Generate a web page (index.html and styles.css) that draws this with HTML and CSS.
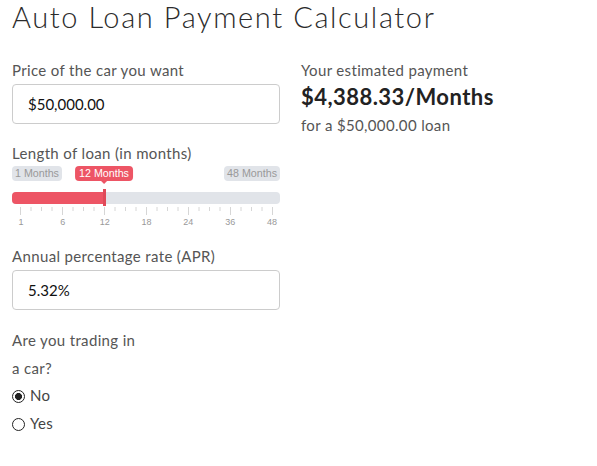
FILE: index.html
```html
<!DOCTYPE html>
<html lang="en">
<head>
<meta charset="utf-8">
<title>Auto Loan Payment Calculator</title>
<link rel="stylesheet" href="styles.css">
</head>
<body>
<div class="page">
  <h1 class="title">Auto Loan Payment Calculator</h1>
  <div class="layout">
    <div class="form">
      <div class="group">
        <label class="label" for="price">Price of the car you want</label>
        <input class="field" id="price" type="text" value="$50,000.00">
      </div>
      <div class="group group-slider">
        <div class="label">Length of loan (in months)</div>
        <div class="slider">
          <div class="slider-labels">
            <span class="edge">1 Months</span>
            <span class="tip">12 Months</span>
            <span class="edge">48 Months</span>
          </div>
          <div class="track">
            <div class="fill"></div>
            <div class="handle"></div>
          </div>
          <svg class="ticks" width="268" height="9" viewBox="0 0 268 9">
            <g stroke="#d6d6d6" stroke-width="1">
              <line x1="8.5" y1="0" x2="8.5" y2="8"/><line x1="19" y1="0" x2="19" y2="4"/><line x1="29.5" y1="0" x2="29.5" y2="4"/><line x1="40" y1="0" x2="40" y2="4"/>
              <line x1="50.5" y1="0" x2="50.5" y2="8"/><line x1="61" y1="0" x2="61" y2="4"/><line x1="71.5" y1="0" x2="71.5" y2="4"/><line x1="82" y1="0" x2="82" y2="4"/>
              <line x1="92.5" y1="0" x2="92.5" y2="8"/><line x1="103" y1="0" x2="103" y2="4"/><line x1="113.5" y1="0" x2="113.5" y2="4"/><line x1="124" y1="0" x2="124" y2="4"/>
              <line x1="134.5" y1="0" x2="134.5" y2="8"/><line x1="145" y1="0" x2="145" y2="4"/><line x1="155.5" y1="0" x2="155.5" y2="4"/><line x1="166" y1="0" x2="166" y2="4"/>
              <line x1="176.5" y1="0" x2="176.5" y2="8"/><line x1="187" y1="0" x2="187" y2="4"/><line x1="197.5" y1="0" x2="197.5" y2="4"/><line x1="208" y1="0" x2="208" y2="4"/>
              <line x1="218.5" y1="0" x2="218.5" y2="8"/><line x1="229" y1="0" x2="229" y2="4"/><line x1="239.5" y1="0" x2="239.5" y2="4"/><line x1="250" y1="0" x2="250" y2="4"/>
              <line x1="260.5" y1="0" x2="260.5" y2="8"/>
            </g>
          </svg>
          <div class="tick-labels">
            <span>1</span><span>6</span><span>12</span><span>18</span><span>24</span><span>36</span><span>48</span>
          </div>
        </div>
      </div>
      <div class="group group-apr">
        <label class="label" for="apr">Annual percentage rate (APR)</label>
        <input class="field" id="apr" type="text" value="5.32%">
      </div>
      <div class="trade">
        <div class="trade-question">Are you trading in a car?</div>
        <label class="option"><input class="radio" type="radio" name="trade" checked>No</label>
        <label class="option"><input class="radio" type="radio" name="trade">Yes</label>
      </div>
    </div>
    <div class="result">
      <p class="result-intro">Your estimated payment</p>
      <p class="result-amount">$4,388.33/Months</p>
      <p class="result-note">for a $50,000.00 loan</p>
    </div>
  </div>
</div>
</body>
</html>
```
FILE: styles.css
```css
* { box-sizing: border-box; }
body {
  margin: 0;
  background: #fff;
  font-family: "Lato", "Open Sans", sans-serif;
  color: #555;
}
.page { padding: 0 12px; }
.title {
  margin: 0;
  font-size: 29px;
  line-height: 34px;
  font-weight: 300;
  letter-spacing: 1.6px;
  color: #2b2b2b;
}
.layout {
  display: flex;
  gap: 21px;
  margin-top: 26px;
}
.form { width: 268px; flex: none; }
.group { margin-bottom: 19px; }
.label {
  display: block;
  font-size: 15px;
  line-height: 21px;
  letter-spacing: 0.35px;
  color: #555;
  margin-bottom: 3px;
}
.field {
  display: block;
  width: 100%;
  height: 40px;
  border: 1px solid #ccc;
  border-radius: 4px;
  padding: 0 15px;
  font-family: "Lato", "Open Sans", sans-serif;
  font-size: 15px;
  color: #111;
  background: #fff;
  outline: none;
}
.group-slider .label { margin-bottom: 0; }
.group-slider { margin-bottom: 18px; }
.slider { font-family: "Liberation Sans", Arial, sans-serif; }
.slider-labels {
  position: relative;
  display: flex;
  justify-content: space-between;
  margin-top: 2px;
  height: 15px;
}
.edge {
  background: #e1e4e9;
  color: #999;
  font-size: 10.7px;
  line-height: 13px;
  padding: 1px 3px;
  border-radius: 4px;
}
.tip {
  position: absolute;
  left: 92px;
  top: 0;
  transform: translateX(-50%);
  background: #ed5565;
  color: #fff;
  font-size: 10.7px;
  line-height: 13px;
  padding: 1px 4px;
  border-radius: 4px;
  white-space: nowrap;
}
.tip::after {
  content: "";
  position: absolute;
  left: 50%;
  top: 100%;
  margin-left: -3px;
  border: 3px solid transparent;
  border-top-color: #ed5565;
}
.track {
  position: relative;
  margin-top: 11px;
  height: 12px;
  background: #e1e4e9;
  border-radius: 4px;
}
.fill {
  width: 92px;
  height: 12px;
  background: #ed5565;
  border-radius: 4px 0 0 4px;
}
.handle {
  position: absolute;
  left: 91px;
  top: -3px;
  width: 3px;
  height: 17px;
  background: #e04a59;
}
.ticks { display: block; margin-top: 3px; }
.tick-labels {
  display: flex;
  justify-content: space-between;
  margin: 1px 8px 0 9px;
  height: 11px;
  font-size: 9px;
  line-height: 11px;
  color: #999;
}
.tick-labels span {
  width: 0;
  display: flex;
  justify-content: center;
  white-space: nowrap;
}
.group-apr { margin-bottom: 17px; }
.trade {
  font-size: 15px;
  line-height: 27.6px;
  letter-spacing: 0.35px;
  color: #555;
}
.trade-question { width: 135px; }
.option { display: block; color: #444; }
.radio {
  -webkit-appearance: none;
  appearance: none;
  width: 13px;
  height: 13px;
  margin: 0 5px 0 0;
  border: 1px solid #222;
  border-radius: 50%;
  background: #fff;
  vertical-align: -2px;
}
.radio:checked {
  background: radial-gradient(circle, #222 0 3.2px, #fff 3.8px);
}
.result p { margin: 0; }
.result-intro { font-size: 15px; line-height: 21px; letter-spacing: 0.35px; color: #555; }
.result-amount {
  margin-top: 2px !important;
  font-size: 22px;
  line-height: 28px;
  font-weight: 700;
  letter-spacing: 0.45px;
  color: #222;
}
.result-note {
  margin-top: 4px !important;
  font-size: 15px;
  line-height: 21px;
  letter-spacing: 0.35px;
  color: #555;
}
```
